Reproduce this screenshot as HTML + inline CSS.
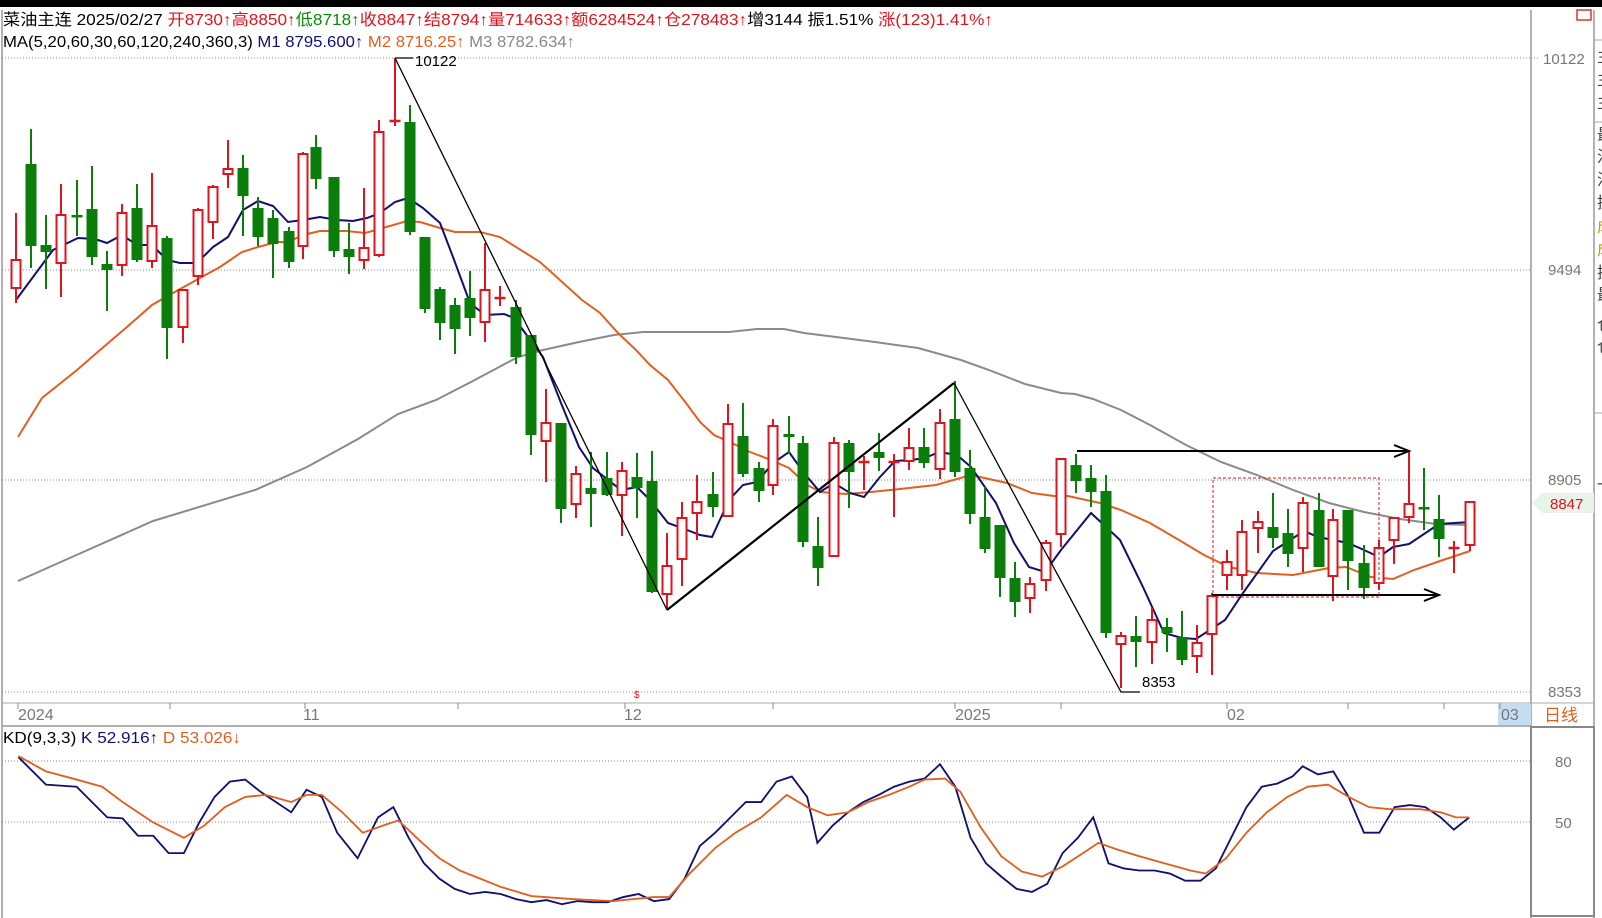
<!DOCTYPE html>
<html><head><meta charset="utf-8">
<style>
html,body{margin:0;padding:0;background:#fff;width:1602px;height:918px;overflow:hidden}
svg{display:block}
text{font-family:"Liberation Sans","Noto Sans CJK SC",sans-serif}
</style></head>
<body>
<svg id="s" width="1602" height="918" viewBox="0 0 1602 918" xmlns="http://www.w3.org/2000/svg">
<rect x="0" y="0" width="1602" height="918" fill="#fff"/>
<rect x="0" y="0" width="1602" height="7" fill="#000"/>
<!-- borders -->
<line x1="2" y1="10" x2="2" y2="918" stroke="#999" stroke-width="1.5"/>
<line x1="1531" y1="10" x2="1531" y2="918" stroke="#999" stroke-width="1.5"/>
<line x1="1594" y1="10" x2="1594" y2="918" stroke="#999" stroke-width="1.5"/>
<line x1="2" y1="703" x2="1594" y2="703" stroke="#aaa" stroke-width="1"/>
<line x1="2" y1="726" x2="1531" y2="726" stroke="#999" stroke-width="1.5"/>
<rect x="1531" y="727" width="63" height="189" fill="none" stroke="#888" stroke-width="2"/>
<!-- grid -->
<g stroke="#888" stroke-width="1" stroke-dasharray="1,2">
<line x1="2" y1="58" x2="1531" y2="58"/><line x1="2" y1="270" x2="1531" y2="270"/>
<line x1="2" y1="480" x2="1531" y2="480"/><line x1="2" y1="692" x2="1531" y2="692"/>
<line x1="2" y1="761" x2="1531" y2="761"/><line x1="2" y1="822" x2="1531" y2="822"/>
<line x1="1531" y1="58" x2="1538" y2="58"/>
</g>
<g font-size="15" fill="#777">
<text x="1543" y="64">10122</text><text x="1548" y="275">9494</text>
<text x="1548" y="485">8905</text><text x="1548" y="697">8353</text>
<text x="1555" y="767">80</text><text x="1555" y="828">50</text>
</g>
<path d="M1532,503 L1542,493 L1594,493 L1594,513 L1542,513 Z" fill="#e8f3ea"/>
<text x="1550" y="509" font-size="15" fill="#e0141c">8847</text>
<rect x="1577" y="10" width="14" height="10" fill="none" stroke="#d33" stroke-width="1.5"/>
<!-- right clipped panel -->
<g font-size="16" fill="#444">
<text x="1597" y="62">主</text><text x="1597" y="85">主</text><text x="1597" y="108">主</text>
<text x="1597" y="140">最</text><text x="1597" y="162">沿</text><text x="1597" y="185">沿</text>
<text x="1597" y="208">换</text><text x="1597" y="232" fill="#c90">成</text><text x="1597" y="255" fill="#c90">成</text>
<text x="1597" y="278">换</text><text x="1597" y="300">最</text><text x="1597" y="330">仓</text><text x="1597" y="352">仓</text>
<text x="1597" y="490">一</text>
</g>
<line x1="1594" y1="40" x2="1602" y2="40" stroke="#aaa"/><line x1="1594" y1="122" x2="1602" y2="122" stroke="#aaa"/><line x1="1594" y1="413" x2="1602" y2="413" stroke="#aaa"/>
<!-- date axis -->
<rect x="1498" y="704" width="33" height="21" fill="#c5dcf3"/>
<g font-size="16" fill="#777">
<text x="18" y="720">2024</text><text x="303" y="720">11</text><text x="624" y="720">12</text>
<text x="955" y="720">2025</text><text x="1227" y="720">02</text><text x="1501" y="720">03</text>
</g>
<text x="1544" y="721" font-size="17" fill="#e06020">日线</text>
<g stroke="#888" stroke-width="1">
<line x1="18" y1="703" x2="18" y2="709"/><line x1="170" y1="703" x2="170" y2="709"/><line x1="305" y1="703" x2="305" y2="709"/><line x1="458" y1="703" x2="458" y2="709"/><line x1="625" y1="703" x2="625" y2="709"/><line x1="773" y1="703" x2="773" y2="709"/><line x1="955" y1="703" x2="955" y2="709"/><line x1="1061" y1="703" x2="1061" y2="709"/><line x1="1227" y1="703" x2="1227" y2="709"/><line x1="1348" y1="703" x2="1348" y2="709"/><line x1="1444" y1="703" x2="1444" y2="709"/><line x1="1500" y1="703" x2="1500" y2="709"/>
</g>
<text x="634" y="698" font-size="10" fill="#e0141c">$</text>
<!-- header -->
<text x="3" y="25" font-size="16" textLength="990" lengthAdjust="spacingAndGlyphs"><tspan fill="#000">菜油主连 2025/02/27 </tspan><tspan fill="#e0141c">开8730↑高8850↑</tspan><tspan fill="#0a8a0a">低8718↑</tspan><tspan fill="#e0141c">收8847↑结8794↑量714633↑额6284524↑仓278483↑</tspan><tspan fill="#000">增3144 振1.51% </tspan><tspan fill="#e0141c">涨(123)1.41%↑</tspan></text>
<text x="3" y="47" font-size="16" textLength="572" lengthAdjust="spacingAndGlyphs"><tspan fill="#000">MA(5,20,60,30,60,120,240,360,3)  </tspan><tspan fill="#10107a">M1 8795.600↑  </tspan><tspan fill="#e06020">M2 8716.25↑  </tspan><tspan fill="#888">M3 8782.634↑</tspan></text>
<text x="3" y="743" font-size="16" textLength="238" lengthAdjust="spacingAndGlyphs"><tspan fill="#000">KD(9,3,3)  </tspan><tspan fill="#10107a">K 52.916↑  </tspan><tspan fill="#e06020">D 53.026↓</tspan></text>
<!-- MA lines -->
<polyline fill="none" stroke="#8a8a8a" stroke-width="2" points="18,581 72,557 153,521 255,490 307,467 358,439 398,414 436,400 471,382 518,357 543,350 579,342 614,335 643,332 686,332 729,332 757,329 784,329 804,333 836,337 875,342 918,348 961,360 989,370 1025,384 1061,393 1075,394 1093,399 1121,410 1150,425 1186,445 1221,462 1257,475 1293,490 1329,503 1364,512 1400,519 1436,524 1470,525"/>
<polyline fill="none" stroke="#e06020" stroke-width="2" points="18,437 42,398 77,370 100,350 127,327 152,305 173,293 200,278 220,267 242,252 258,247 277,242 288,242 303,235 320,231 347,231 365,233 383,228 407,221 420,222 440,228 455,232 480,232 500,237 540,262 582,300 600,313 618,333 636,350 650,365 668,380 686,403 700,422 714,435 732,443 750,452 771,460 789,468 807,485 821,492 846,494 871,492 900,489 936,485 971,475 1007,483 1032,493 1054,496 1068,496 1100,503 1121,510 1150,523 1179,540 1204,555 1229,567 1257,573 1293,575 1329,568 1346,567 1371,577 1393,579 1414,570 1443,560 1470,551"/>
<polyline fill="none" stroke="#10106e" stroke-width="2" points="16,300 53,250 78,238 95,239 107,243 122,235 137,245 152,245 167,260 180,263 197,263 213,247 228,237 243,210 258,201 273,206 288,222 303,220 320,217 337,220 353,221 367,218 380,213 395,202 408,198 423,208 440,223 453,257 470,303 485,315 504,314 514,318 543,357 561,403 579,447 593,468 621,490 637,487 650,500 668,523 682,528 700,535 712,537 729,500 743,485 757,482 773,463 789,452 804,473 820,492 834,483 850,493 864,497 880,477 895,461 911,460 925,458 939,452 957,455 971,467 996,503 1014,543 1029,567 1045,572 1061,550 1091,513 1120,540 1143,587 1164,633 1182,638 1196,639 1225,620 1243,593 1273,551 1304,531 1318,537 1348,543 1364,550 1379,557 1393,547 1409,544 1439,524 1470,522"/>
<g id="candles"></g>
<!-- drawn lines -->
<polyline fill="none" stroke="#000" stroke-width="1.3" points="395,58 667,610"/>
<polyline fill="none" stroke="#000" stroke-width="2.2" points="667,610 954,383"/>
<polyline fill="none" stroke="#000" stroke-width="1.3" points="954,383 1121,692 1140,692"/>
<line x1="395" y1="58" x2="413" y2="58" stroke="#000" stroke-width="1.3"/>
<text x="415" y="66" font-size="15" fill="#000">10122</text>
<text x="1142" y="687" font-size="15" fill="#000">8353</text>
<line x1="1077" y1="451" x2="1409" y2="451" stroke="#000" stroke-width="2"/>
<polyline fill="none" stroke="#000" stroke-width="2" points="1394,445 1409,451 1394,457"/>
<line x1="1212" y1="595" x2="1439" y2="595" stroke="#000" stroke-width="2"/>
<polyline fill="none" stroke="#000" stroke-width="2" points="1424,589 1439,595 1424,601"/>
<rect x="1213" y="478" width="166" height="119" fill="none" stroke="#e0141c" stroke-width="1" stroke-dasharray="3,2"/>
<!-- KD -->
<g transform="scale(1.0217)">
<polyline fill="none" stroke="#10106e" stroke-width="1.8" points="18,741 45,768 75,770 105,800 120,801 135,818 150,818 165,835 180,835 195,805 210,780 225,765 240,763 255,775 270,785 285,795 300,773 315,780 330,815 350,840 370,800 385,790 400,820 415,845 430,860 445,870 460,875 475,873 490,875 505,880 520,883 535,881 550,885 565,882 580,883 595,883 610,878 625,875 640,882 655,880 670,860 685,828 700,815 715,800 730,785 745,785 760,765 775,760 790,780 800,825 815,808 830,795 845,785 860,778 875,770 890,765 905,762 920,748 935,770 950,820 965,845 980,858 995,870 1010,873 1025,865 1040,835 1055,820 1070,800 1085,845 1100,850 1115,852 1130,852 1145,855 1160,862 1175,862 1190,850 1205,820 1220,790 1235,770 1250,767 1265,760 1275,750 1290,758 1305,755 1320,780 1335,815 1350,815 1365,790 1380,788 1395,790 1410,800 1423,812 1438,800"/>
<polyline fill="none" stroke="#e06020" stroke-width="1.8" points="18,740 45,755 75,763 100,770 120,785 150,805 180,820 200,808 220,790 240,780 260,778 285,785 300,778 315,778 335,795 355,815 375,808 390,803 410,822 430,840 450,852 470,860 490,868 520,877 560,880 600,882 640,878 655,878 675,855 700,830 720,815 745,800 770,778 790,790 810,798 830,795 850,785 870,778 890,770 905,763 925,762 940,775 960,810 980,838 1000,853 1020,858 1040,848 1060,835 1075,825 1095,832 1115,838 1140,845 1165,852 1180,855 1200,840 1220,815 1240,795 1260,780 1280,770 1300,768 1320,780 1340,790 1360,792 1390,792 1410,795 1425,800 1438,800"/>
</g>
</svg>
<script>
var D=[[16,'r',260,288,213,303],[31,'g',164,246,129,268],[46,'g',245,252,215,289],[61,'r',215,263,184,297],[77,'g',215,217,180,236],[92,'g',209,257,166,265],[107,'g',264,270,251,311],[122,'r',213,265,204,276],[137,'g',208,260,184,262],[152,'r',226,261,173,268],[167,'g',238,328,236,359],[183,'r',290,327,290,343],[198,'r',210,276,208,285],[213,'r',187,222,185,239],[228,'r',169,174,140,188],[243,'g',168,196,155,236],[258,'g',208,237,197,246],[273,'g',218,244,210,278],[289,'g',231,262,227,268],[303,'r',154,246,152,259],[316,'g',147,179,135,189],[334,'g',177,251,177,257],[349,'g',249,257,223,274],[364,'r',248,260,188,269],[379,'r',132,255,120,257],[395,'r',120,122,58,126],[410,'g',122,232,105,235],[425,'g',237,309,237,313],[440,'g',289,323,287,340],[455,'g',305,329,298,354],[470,'g',298,318,271,336],[485,'r',290,322,243,342],[500,'r',297,299,286,306],
[516,'g',307,357,300,364],[531,'g',335,435,335,455],[546,'r',423,441,389,482],[561,'g',423,509,423,523],[576,'r',474,504,466,518],[591,'g',488,494,452,527],[607,'g',478,495,452,496],[622,'r',471,495,462,536],[637,'g',477,488,453,518],[652,'g',481,592,451,593],[667,'r',566,594,533,608],[682,'r',518,559,502,586],[697,'r',502,513,475,540],[713,'g',494,507,472,517],[728,'r',424,516,404,516],[743,'g',436,474,403,477],[759,'g',468,491,462,502],[773,'r',426,485,419,495],[789,'g',434,437,416,454],[803,'g',443,542,436,547],[818,'g',546,568,517,586],[834,'r',443,556,437,557],[849,'g',443,472,440,508],[864,'r',461,463,456,490],[879,'g',452,458,433,471],[894,'r',461,463,454,517],[909,'r',448,461,428,470],[924,'g',447,463,428,468],[940,'r',423,469,409,479],[955,'g',419,472,381,477],
[970,'g',468,514,450,524],[985,'g',517,549,487,553],[1000,'g',525,578,525,597],[1015,'g',578,602,562,617],[1030,'r',584,598,577,613],[1046,'r',543,580,540,591],[1061,'r',459,534,459,547],[1076,'g',465,481,454,493],[1091,'g',478,492,465,507],[1106,'g',491,633,475,638],[1121,'r',636,644,632,688],[1136,'g',636,642,616,667],[1152,'r',620,642,608,664],[1167,'g',627,633,618,652],[1182,'g',637,660,611,665],[1197,'r',643,656,625,673],[1212,'r',596,634,593,675],[1227,'r',562,575,550,590],[1242,'r',532,575,520,590],[1258,'r',522,528,511,553],[1273,'g',527,538,493,548],[1288,'g',533,554,509,567],[1303,'r',503,548,497,572],[1319,'g',510,567,493,567],[1333,'r',520,576,509,601],[1348,'g',510,561,510,590],[1364,'g',563,588,545,599],[1379,'r',548,583,540,590],[1394,'r',518,540,517,564],[1409,'r',504,517,451,523],[1424,'g',507,509,468,530],[1439,'g',519,539,495,557],[1454,'r',547,549,541,573],[1470,'r',502,545,502,551]];
var h='';
D.forEach(function(c){var x=c[0],t=c[2],b=c[3],hi=c[4],lo=c[5];
 if(c[1]=='g'){var col='#0b7d0b';
  h+='<line x1="'+x+'" y1="'+hi+'" x2="'+x+'" y2="'+lo+'" stroke="'+col+'" stroke-width="2"/>';
  h+='<rect x="'+(x-5.5)+'" y="'+t+'" width="11" height="'+Math.max(b-t,2.5)+'" fill="'+col+'"/>';
 } else {var col='#e0141c';
  if(b-t<4){
   h+='<line x1="'+x+'" y1="'+hi+'" x2="'+x+'" y2="'+lo+'" stroke="'+col+'" stroke-width="2"/>';
   h+='<line x1="'+(x-5.5)+'" y1="'+((t+b)/2)+'" x2="'+(x+5.5)+'" y2="'+((t+b)/2)+'" stroke="'+col+'" stroke-width="2.5"/>';
  } else {
   if(hi<t)h+='<line x1="'+x+'" y1="'+hi+'" x2="'+x+'" y2="'+t+'" stroke="'+col+'" stroke-width="2"/>';
   if(lo>b)h+='<line x1="'+x+'" y1="'+b+'" x2="'+x+'" y2="'+lo+'" stroke="'+col+'" stroke-width="2"/>';
   h+='<rect x="'+(x-4.5)+'" y="'+t+'" width="9" height="'+(b-t)+'" fill="#fff" stroke="'+col+'" stroke-width="2"/>';
  }}
});
document.getElementById('candles').innerHTML=h;
</script>
</body></html>
